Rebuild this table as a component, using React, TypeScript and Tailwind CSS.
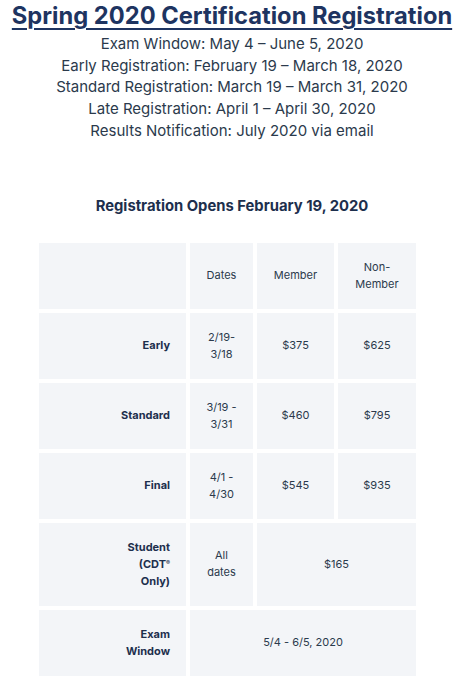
import React from 'react';

const font = { fontFamily: 'Inter, Lato, sans-serif' };

const schedule = [
  'Exam Window: May 4 – June 5, 2020',
  'Early Registration: February 19 – March 18, 2020',
  'Standard Registration: March 19 – March 31, 2020',
  'Late Registration: April 1 – April 30, 2020',
  'Results Notification: July 2020 via email',
];

const fees = [
  { label: 'Early', dates: ['2/19-', '3/18'], member: '$375', non: '$625' },
  { label: 'Standard', dates: ['3/19 -', '3/31'], member: '$460', non: '$795' },
  { label: 'Final', dates: ['4/1 -', '4/30'], member: '$545', non: '$935' },
];

const cell = 'bg-[#f3f5f8] text-center align-middle text-[11px] leading-[17px] text-[#2b3a4c]';
const head = 'bg-[#f3f5f8] text-right align-middle pr-[16px] text-[11px] leading-[17px] font-bold text-[#1d2f4d]';

const App: React.FC = () => {
  return (
    <div className="w-[464px] h-[684px] bg-white overflow-hidden" style={font}>
      <h1 className="text-center text-[23.7px] leading-[30px] pt-[1px] font-bold text-[#1e3461] underline decoration-[2px] underline-offset-[4px]">
        Spring 2020 Certification Registration
      </h1>
      <div className="mt-[2px] text-center text-[15px] leading-[21.7px] text-[#2b3a4c]">
        {schedule.map(s => (
          <p key={s}>{s}</p>
        ))}
      </div>
      <h2 className="mt-[54px] text-center text-[14.8px] leading-[20px] font-bold text-[#1d2f4d]">
        Registration Opens February 19, 2020
      </h2>
      <table className="ml-[35px] mt-[23px] border-separate border-spacing-[4px]">
        <tbody>
          <tr className="h-[66px]">
            <td className="bg-[#f3f5f8] w-[147px]"></td>
            <td className={`${cell} w-[63px]`}>Dates</td>
            <td className={`${cell} w-[77px]`}>Member</td>
            <td className={`${cell} w-[78px]`}>
              Non-
              <br />
              Member
            </td>
          </tr>
          {fees.map(f => (
            <tr key={f.label} className="h-[66px]">
              <td className={head}>{f.label}</td>
              <td className={cell}>
                {f.dates[0]}
                <br />
                {f.dates[1]}
              </td>
              <td className={cell}>{f.member}</td>
              <td className={cell}>{f.non}</td>
            </tr>
          ))}
          <tr className="h-[83px]">
            <td className={head}>
              Student
              <br />
              (CDT<sup className="text-[6px]">®</sup>
              <br />
              Only)
            </td>
            <td className={cell}>
              All
              <br />
              dates
            </td>
            <td className={cell} colSpan={2}>$165</td>
          </tr>
          <tr className="h-[66px]">
            <td className={head}>
              Exam
              <br />
              Window
            </td>
            <td className={cell} colSpan={3}>5/4 - 6/5, 2020</td>
          </tr>
        </tbody>
      </table>
    </div>
  );
};

export default App;
